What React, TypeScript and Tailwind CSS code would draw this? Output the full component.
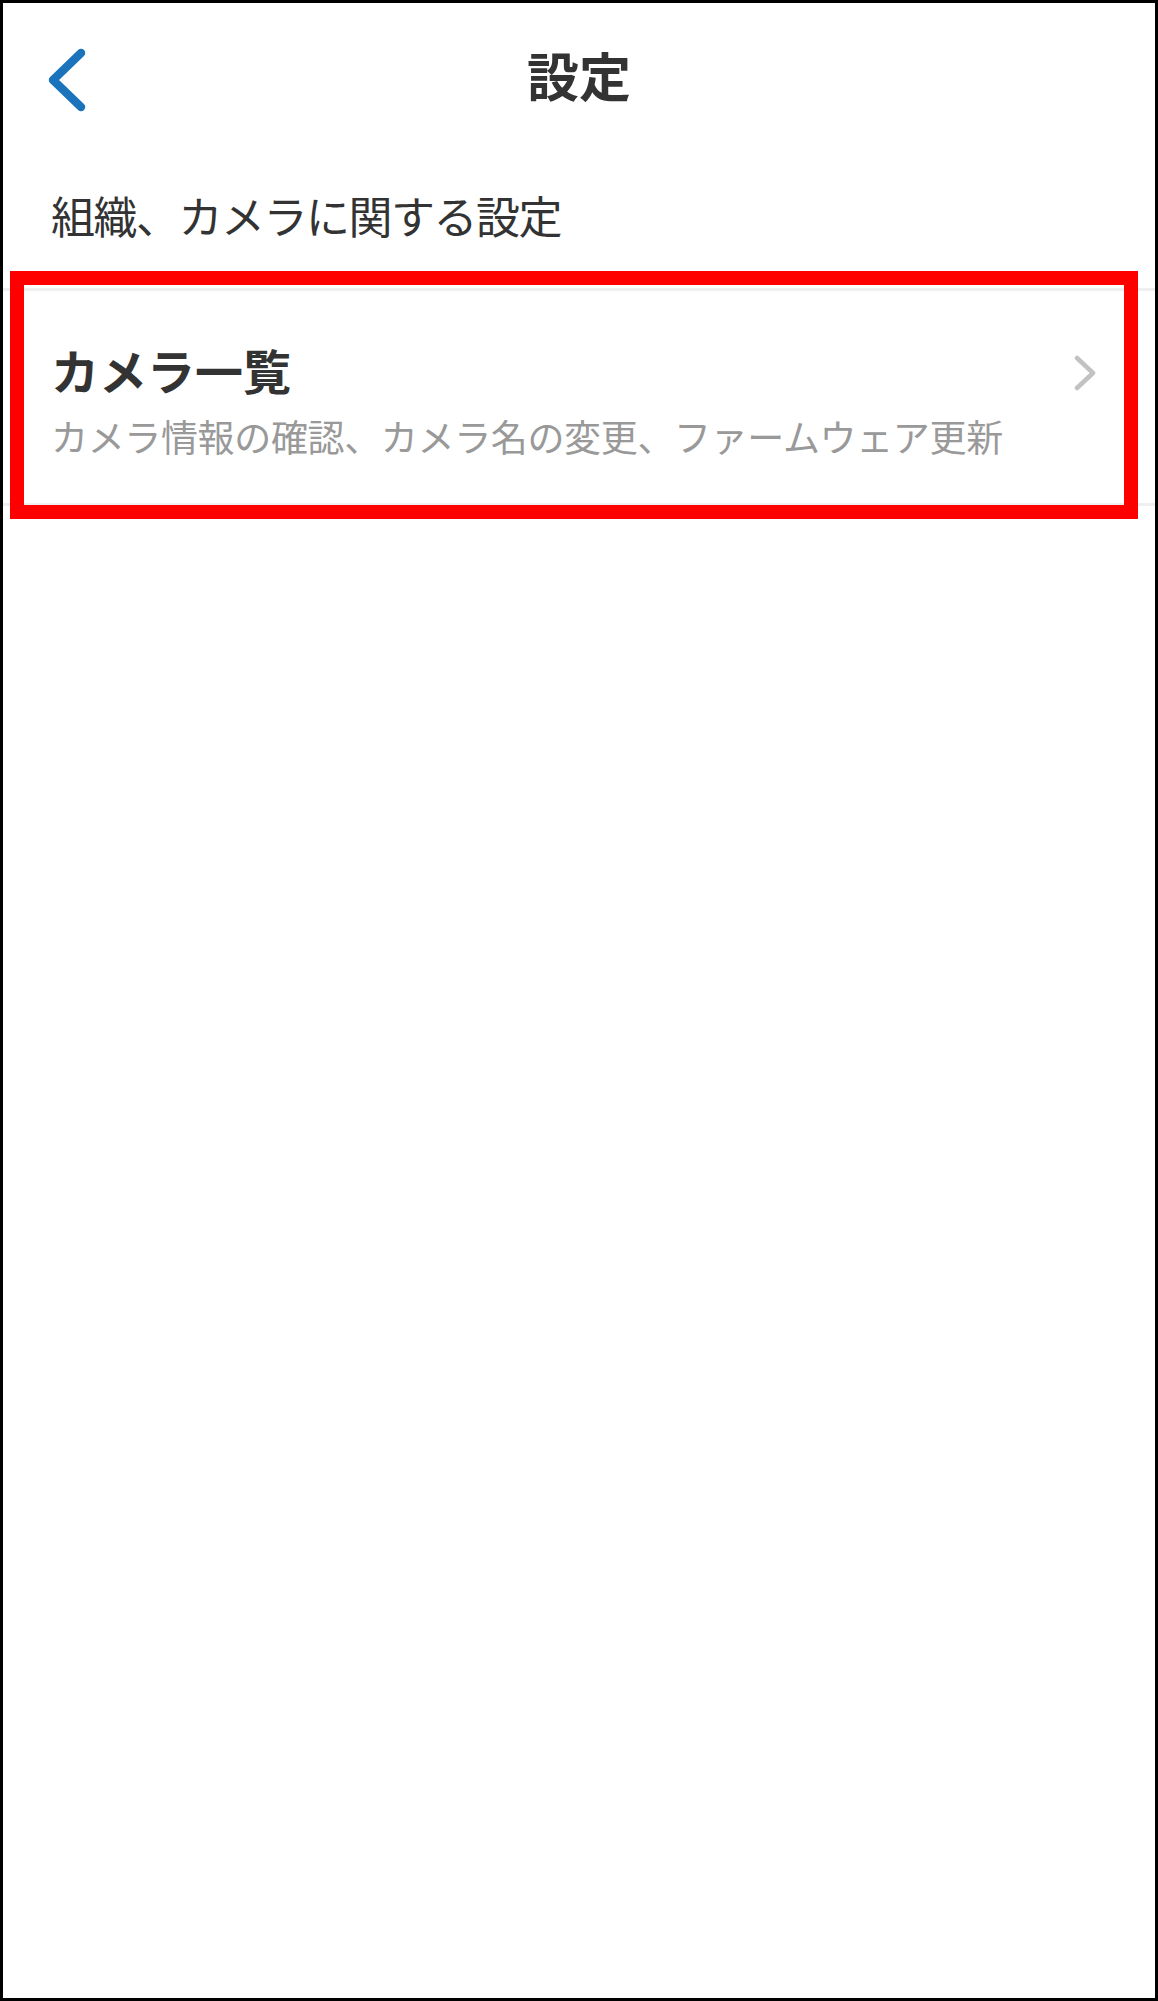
import React from "react";

const font = { fontFamily: '"Noto Sans CJK JP", "Noto Sans", sans-serif' };

function BackIcon() {
    return (
        <svg width="40" height="64" viewBox="0 0 40 64" fill="none" stroke="#1b74bb" strokeWidth="8.5" strokeLinecap="round" strokeLinejoin="round">
            <polyline points="33 5 5 32 33 59" />
        </svg>
    );
}

function ChevronRight() {
    return (
        <svg width="24" height="36" viewBox="0 0 24 36" fill="none" stroke="#c2c2c2" strokeWidth="4.5" strokeLinecap="round" strokeLinejoin="round">
            <polyline points="4 3 20 18 4 33" />
        </svg>
    );
}

export default function App() {
    return (
        <div className="w-[1158px] h-[2001px] bg-white border-[3px] border-black relative" style={font}>
            {/* nav bar */}
            <div className="grid grid-cols-[1fr_auto_1fr] items-center h-[144px]">
                <button className="justify-self-start ml-[45px] mt-[9px] bg-transparent border-none p-0">
                    <BackIcon />
                </button>
                <h1 className="text-[52px] font-bold text-[#333333] leading-none">設定</h1>
                <div />
            </div>

            {/* section header */}
            <div className="pl-[48px] pt-[40px] pb-[45px]">
                <p className="text-[44px] leading-[56px] tracking-[-1.5px] text-[#333333]">組織、カメラに関する設定</p>
            </div>

            {/* list */}
            <div className="border-t-[3px] border-b-[3px] border-[#efefef]">
                <div className="flex items-start pl-[48px] pr-[58px] pt-[49px] pb-[45px]">
                    <div className="flex flex-col gap-[16px] flex-1">
                        <span className="text-[48px] leading-[58px] font-bold text-[#333333]">カメラ一覧</span>
                        <span className="text-[37px] leading-[44px] tracking-[-0.35px] text-[#999999]">
                            カメラ情報の確認、カメラ名の変更、ファームウェア更新
                        </span>
                    </div>
                    <div className="mt-[15px]">
                        <ChevronRight />
                    </div>
                </div>
            </div>

            {/* annotation */}
            <div className="absolute left-[7px] top-[268px] w-[1128px] h-[248px] border-[14px] border-[#ff0000] pointer-events-none" />
        </div>
    );
}
